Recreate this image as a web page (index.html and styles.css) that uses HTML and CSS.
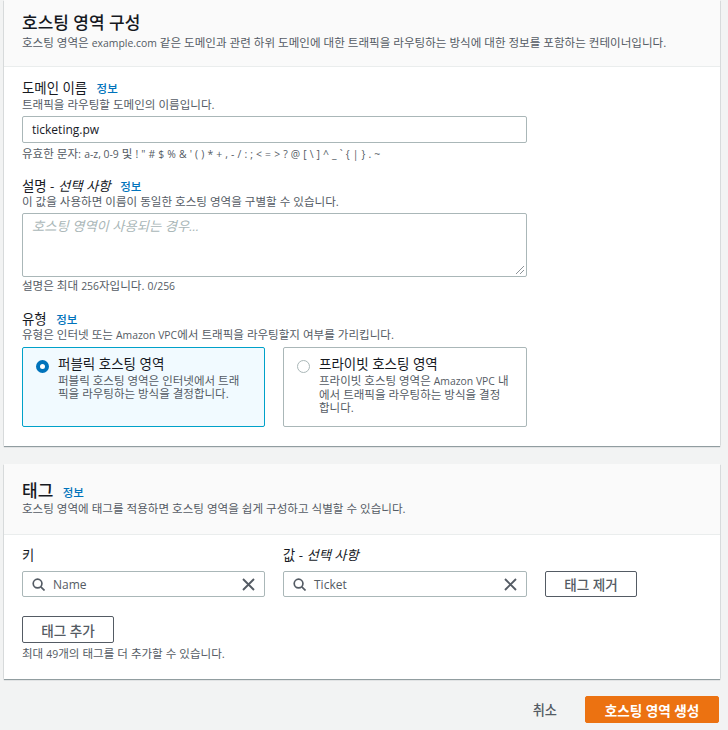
FILE: index.html
```html
<!DOCTYPE html>
<html lang="ko">
<head>
<meta charset="utf-8">
<title>호스팅 영역 생성</title>
<link rel="stylesheet" href="styles.css">
</head>
<body>
<section class="card card-main">
  <header class="card-head head-main">
    <h2 class="title">호스팅 영역 구성</h2>
    <p class="desc">호스팅 영역은 <span class="lat">example.com</span> 같은 도메인과 관련 하위 도메인에 대한 트래픽을 라우팅하는 방식에 대한 정보를 포함하는 컨테이너입니다.</p>
  </header>
  <div class="card-body body-main">
    <div class="field f-domain">
      <div class="label">도메인 이름 <a class="info">정보</a></div>
      <p class="desc">트래픽을 라우팅할 도메인의 이름입니다.</p>
      <div class="input"><span class="value">ticketing.pw</span></div>
      <p class="desc hint">유효한 문자: <span class="lat">a-z, 0-9</span> 및 <span class="lat sym">! " # $ % &amp; ' ( ) * + , - / : ; &lt; = &gt; ? @ [ \ ] ^ _ ` { | } . ~</span></p>
    </div>
    <div class="field f-desc">
      <div class="label">설명 - <i>선택 사항</i> <a class="info">정보</a></div>
      <p class="desc">이 값을 사용하면 이름이 동일한 호스팅 영역을 구별할 수 있습니다.</p>
      <div class="textarea">
        <span class="placeholder">호스팅 영역이 사용되는 경우...</span>
        <svg class="grip" width="10" height="10" viewBox="0 0 10 10"><path d="M1 9 9 1M5 9 9 5" stroke="#8d9499" fill="none"/></svg>
      </div>
      <p class="desc hint hint-tight">설명은 최대 <span class="lat">256</span>자입니다. <span class="lat">0/256</span></p>
    </div>
    <div class="field f-type">
      <div class="label">유형 <a class="info">정보</a></div>
      <p class="desc">유형은 인터넷 또는 <span class="lat">Amazon VPC</span>에서 트래픽을 라우팅할지 여부를 가리킵니다.</p>
      <div class="tiles">
        <div class="tile tile-on">
          <span class="radio radio-on"></span>
          <div>
            <div class="tile-title">퍼블릭 호스팅 영역</div>
            <p class="tile-desc">퍼블릭 호스팅 영역은 인터넷에서 트래<br>픽을 라우팅하는 방식을 결정합니다.</p>
          </div>
        </div>
        <div class="tile">
          <span class="radio"></span>
          <div>
            <div class="tile-title">프라이빗 호스팅 영역</div>
            <p class="tile-desc">프라이빗 호스팅 영역은 <span class="lat">Amazon VPC</span> 내<br>에서 트래픽을 라우팅하는 방식을 결정<br>합니다.</p>
          </div>
        </div>
      </div>
    </div>
  </div>
</section>

<section class="card card-tags">
  <header class="card-head head-tags">
    <h2 class="title">태그 <a class="info">정보</a></h2>
    <p class="desc">호스팅 영역에 태그를 적용하면 호스팅 영역을 쉽게 구성하고 식별할 수 있습니다.</p>
  </header>
  <div class="card-body body-tags">
    <div class="tag-row">
      <div class="tag-col">
        <div class="tag-label">키</div>
        <div class="input search">
          <svg class="ico" width="13" height="13" viewBox="0 0 14 14"><circle cx="6" cy="6" r="4.7" fill="none" stroke="#545b64" stroke-width="1.8"/><path d="M9.5 9.5 13.5 13.5" stroke="#545b64" stroke-width="1.8" fill="none"/></svg>
          <span class="value grow">Name</span>
          <svg class="ico" width="13" height="13" viewBox="0 0 13 13"><path d="M1 1 12 12M12 1 1 12" stroke="#545b64" stroke-width="1.9" fill="none"/></svg>
        </div>
      </div>
      <div class="tag-col">
        <div class="tag-label">값 - <i>선택 사항</i></div>
        <div class="input search">
          <svg class="ico" width="13" height="13" viewBox="0 0 14 14"><circle cx="6" cy="6" r="4.7" fill="none" stroke="#545b64" stroke-width="1.8"/><path d="M9.5 9.5 13.5 13.5" stroke="#545b64" stroke-width="1.8" fill="none"/></svg>
          <span class="value grow">Ticket</span>
          <svg class="ico" width="13" height="13" viewBox="0 0 13 13"><path d="M1 1 12 12M12 1 1 12" stroke="#545b64" stroke-width="1.9" fill="none"/></svg>
        </div>
      </div>
      <button class="btn btn-remove">태그 제거</button>
    </div>
    <button class="btn btn-add">태그 추가</button>
    <p class="desc hint hint-add">최대 <span class="lat">49</span>개의 태그를 더 추가할 수 있습니다.</p>
  </div>
</section>

<footer class="actions">
  <button class="cancel">취소</button>
  <button class="primary">호스팅 영역 생성</button>
</footer>
</body>
</html>
```

FILE: styles.css
```css
* { box-sizing: border-box; }
html, body { margin: 0; padding: 0; }
body {
  width: 728px;
  height: 730px;
  overflow: hidden;
  background: #f2f3f3;
  color: #16191f;
  font-family: "Open Sans", "Noto Sans CJK KR", sans-serif;
  font-size: 14px;
}
p { margin: 0; }
.card {
  margin: 0 8px 0 4px;
  background: #fff;
  box-shadow: 0 1px 1px 0 rgba(0, 28, 36, .4), 1px 0 1px -1px rgba(0, 28, 36, .25), -1px 0 1px -1px rgba(0, 28, 36, .25);
}
.card-main { height: 446px; }
.card-tags { height: 215px; margin-top: 18px; }
.card-head {
  background: #fafafa;
  border-bottom: 1px solid #eaeded;
  padding-left: 18px;
}
.head-main { height: 67px; padding-top: 12px; }
.head-tags { height: 71px; padding-top: 16px; }
.title {
  margin: 0 0 2px;
  font-size: 17px;
  line-height: 21px;
  font-weight: 500;
}
.title .info { line-height: 1; margin-left: 5px; }
.head-tags .title { margin-bottom: 0; }
.desc {
  color: #545b64;
  font-size: 11.55px;
  line-height: 15px;
  white-space: nowrap;
}
.lat { font-size: 10.4px; }
.sym { letter-spacing: .2px; }
.body-main { padding: 13px 18px 0; }
.field { width: 505px; }
.f-desc { margin-top: 17px; }
.f-type { margin-top: 18px; }
.label {
  font-size: 13.4px;
  line-height: 16px;
  color: #16191f;
}
.f-desc .label, .f-type .label { line-height: 15px; }
.label i, .tag-label i { font-style: italic; }
.info {
  color: #0073bb;
  font-size: 11.5px;
  font-weight: 500;
  margin-left: 6px;
}
.input {
  display: flex;
  align-items: center;
  height: 27px;
  margin-top: 4px;
  padding: 0 9px;
  background: #fff;
  border: 1px solid #aab7b8;
  border-radius: 2px;
}
.value { font-size: 12px; color: #16191f; }
.hint { margin-top: 3px; }
.hint-tight { margin-top: 1px; }
.hint-add { margin-top: 3px; }
.textarea {
  position: relative;
  height: 64px;
  margin-top: 4px;
  padding: 2px 9px;
  border: 1px solid #aab7b8;
  border-radius: 2px;
}
.placeholder {
  color: #aab7b8;
  font-size: 13.3px;
  font-style: italic;
}
.grip { position: absolute; right: 1px; bottom: 1px; }
.tiles {
  display: flex;
  gap: 18px;
  margin-top: 4px;
}
.tile {
  display: flex;
  flex: 1;
  gap: 9px;
  height: 80px;
  padding: 8px 13px;
  border: 1px solid #aab7b8;
  border-radius: 2px;
}
.tile:first-child { flex: 0 0 243px; }
.tile-on {
  background: #f1faff;
  border-color: #00a1c9;
}
.radio {
  flex: none;
  width: 13px;
  height: 13px;
  margin-top: 4px;
  border: 1px solid #aab7b8;
  border-radius: 50%;
  background: #fff;
}
.radio-on { border: 4px solid #0073bb; }
.tile-title {
  font-size: 13.5px;
  line-height: 16px;
  margin-bottom: 2px;
}
.tile-desc {
  color: #545b64;
  font-size: 11.5px;
  line-height: 13px;
  white-space: nowrap;
}
.body-tags { padding: 11px 18px 0; }
.tag-row {
  display: flex;
  align-items: flex-end;
  gap: 18px;
  margin-bottom: 19px;
}
.tag-col { width: 244px; }
.tag-col:first-child { width: 243px; }
.tag-label {
  font-size: 13.3px;
  line-height: 18px;
  margin-bottom: 7px;
}
.search { margin-top: 0; height: 26px; gap: 8px; }
.grow { flex: 1; color: #545b64; }
.ico { flex: none; }
.btn {
  display: block;
  width: 92px;
  height: 26px;
  padding: 0;
  background: #fff;
  border: 1px solid #545b64;
  border-radius: 2px;
  color: #545b64;
  font-family: inherit;
  font-size: 13.6px;
  font-weight: 500;
}
.btn-add { height: 27px; }
.actions {
  display: flex;
  align-items: center;
  justify-content: flex-end;
  gap: 28px;
  margin: 17px 9px 0 0;
}
.cancel {
  padding: 0;
  border: 0;
  background: none;
  color: #545b64;
  font-family: inherit;
  font-size: 13.2px;
  font-weight: 500;
}
.primary {
  width: 134px;
  height: 27px;
  padding: 0;
  border: 1px solid #ec7211;
  border-radius: 2px;
  background: #ec7211;
  color: #fff;
  font-family: inherit;
  font-size: 13.6px;
  font-weight: 700;
}
```
